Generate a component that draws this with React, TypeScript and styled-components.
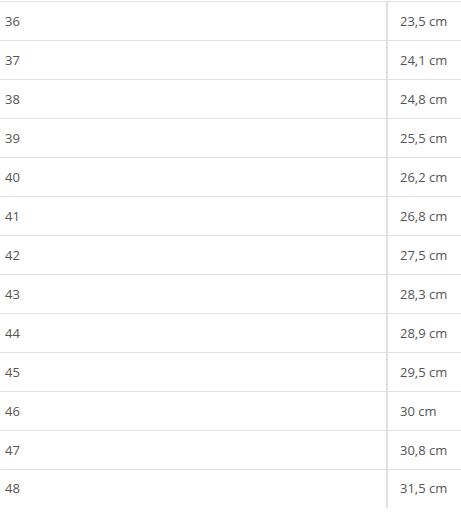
import React from 'react';
import styled, { createGlobalStyle } from 'styled-components';

const sizes: [string, string][] = [
	['36', '23,5 cm'],
	['37', '24,1 cm'],
	['38', '24,8 cm'],
	['39', '25,5 cm'],
	['40', '26,2 cm'],
	['41', '26,8 cm'],
	['42', '27,5 cm'],
	['43', '28,3 cm'],
	['44', '28,9 cm'],
	['45', '29,5 cm'],
	['46', '30 cm'],
	['47', '30,8 cm'],
	['48', '31,5 cm'],
];

const GlobalStyle = createGlobalStyle`
	body {
		margin: 0;
		background: #fff;
		font-family: 'Open Sans', 'Noto Sans', sans-serif;
	}
`;

const Table = styled.table`
	width: 461px;
	margin-top: 1px;
	border-collapse: collapse;
	font-size: 13px;
	color: #555;
`;

const Row = styled.tr<{ $last?: boolean }>`
	height: ${(p) => (p.$last ? 38 : 39)}px;
	border-top: 1px solid #e1e1e1;
`;

const Cell = styled.td<{ $size?: boolean }>`
	padding: 0 0 1px ${(p) => (p.$size ? '12px' : '5px')};
	vertical-align: middle;
	width: ${(p) => (p.$size ? '61px' : 'auto')};
	border-left: ${(p) => (p.$size ? '2px solid #e1e1e1' : 'none')};
	white-space: nowrap;
`;

const App = () => {
	return (
		<>
			<GlobalStyle />
			<Table>
				<tbody>
					{sizes.map(([eu, cm], i) => (
						<Row key={eu} $last={i === sizes.length - 1}>
							<Cell>{eu}</Cell>
							<Cell $size>{cm}</Cell>
						</Row>
					))}
				</tbody>
			</Table>
		</>
	);
};

export default App;
